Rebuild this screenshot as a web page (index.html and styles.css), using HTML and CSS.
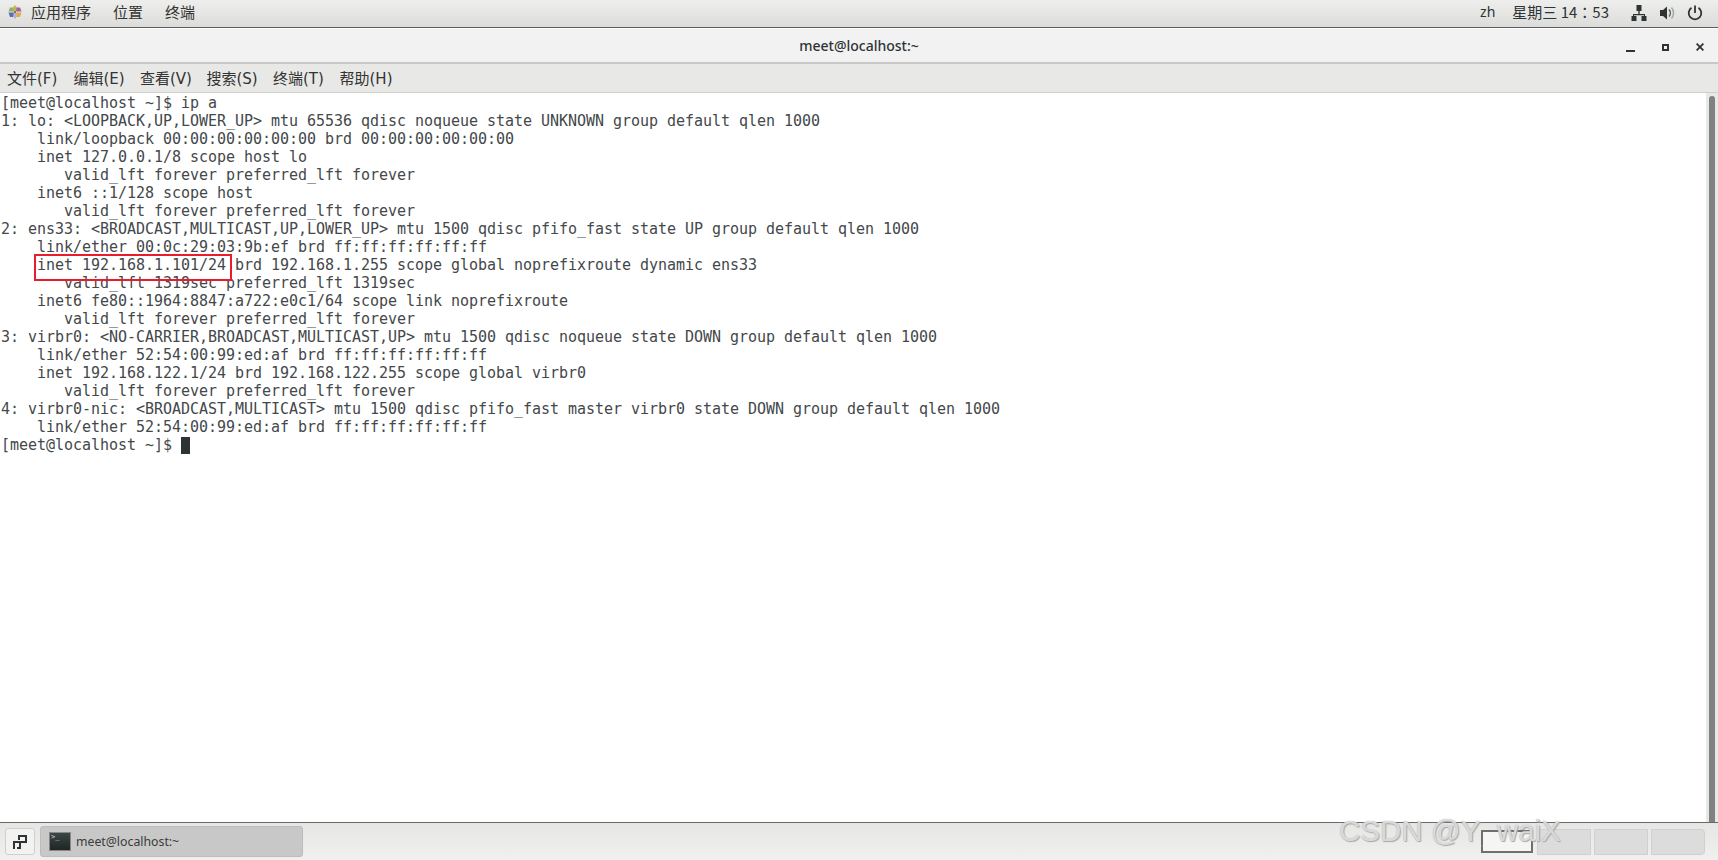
FILE: index.html
```html
<!DOCTYPE html>
<html lang="zh">
<head>
<meta charset="utf-8">
<title>meet@localhost:~</title>
<link rel="stylesheet" href="styles.css">
</head>
<body>
<div class="desktop">
  <header class="topbar">
    <nav class="top-left">
      <svg class="logo" viewBox="0 0 14 14" width="14" height="14">
        <path d="M7 0L9 2.500 8 6H6L5 2.500z" fill="#c9b35a"/>
        <path d="M2 2.500h3.500L6 6.500H0.500z" fill="#8fb35a"/>
        <path d="M12 2.500H8.500L8 6.500h5.500z" fill="#a8609c"/>
        <path d="M0.500 7.500H6L5.500 12H2z" fill="#5a6fb0"/>
        <path d="M13.500 7.500H8L8.500 12H12z" fill="#dcae46"/>
        <path d="M6 8h2l1 3.500L7 14l-2-2.500z" fill="#b9b0c9"/>
        <path d="M6 6h2v2H6z" fill="#8a6a8f"/>
      </svg>
      <span class="top-item">应用程序</span><span class="top-item">位置</span><span class="top-item">终端</span>
    </nav>
    <div class="top-right">
      <span class="lang">zh</span>
      <span class="clock">星期三 14<span class="colon" lang="zh-TW">：</span>53</span>
      <svg class="tray" viewBox="0 0 16 16" width="16" height="16"><path d="M5.500 0h5v6H8.700v3H14v2h1.500v5h-5v-5H13v-.8H3v.8h2.500v5h-5v-5H2V9h5.300V6H5.500z" fill="#2e3436"/></svg>
      <svg class="tray" viewBox="0 0 16 16" width="16" height="16"><path d="M1 5h3l4-3.500v13L4 11H1z" fill="#2e3436"/><path d="M10 4.500c1.800 2 1.800 5 0 7" fill="none" stroke="#5b6061" stroke-width="1.500"/><path d="M12.500 2.500c2.700 3 2.700 8 0 11" fill="none" stroke="#a5a8a8" stroke-width="1.500"/></svg>
      <svg class="tray" viewBox="0 0 16 16" width="16" height="16"><path d="M8 .5v7.500M4.500 2.800a6.300 6.300 0 1 0 7 0" fill="none" stroke="#2e3436" stroke-width="1.800"/></svg>
    </div>
  </header>
  <div class="titlebar">
    <span class="title">meet@localhost:~</span>
    <div class="winbtns">
      <span class="wb-min"></span>
      <span class="wb-max"></span>
      <svg class="wb-close" viewBox="0 0 8 8" width="8" height="8"><path d="M.6.600l6.800 6.800M7.400.600L.6 7.400" stroke="#2e3436" stroke-width="1.800"/></svg>
    </div>
  </div>
  <div class="menubar">
    <span class="menu">文件(F)</span><span class="menu">编辑(E)</span><span class="menu">查看(V)</span><span class="menu">搜索(S)</span><span class="menu">终端(T)</span><span class="menu">帮助(H)</span>
  </div>
  <main class="terminal">
<pre class="output">[meet@localhost ~]$ ip a
1: lo: &lt;LOOPBACK,UP,LOWER_UP&gt; mtu 65536 qdisc noqueue state UNKNOWN group default qlen 1000
    link/loopback 00:00:00:00:00:00 brd 00:00:00:00:00:00
    inet 127.0.0.1/8 scope host lo
       valid_lft forever preferred_lft forever
    inet6 ::1/128 scope host
       valid_lft forever preferred_lft forever
2: ens33: &lt;BROADCAST,MULTICAST,UP,LOWER_UP&gt; mtu 1500 qdisc pfifo_fast state UP group default qlen 1000
    link/ether 00:0c:29:03:9b:ef brd ff:ff:ff:ff:ff:ff
    inet 192.168.1.101/24 brd 192.168.1.255 scope global noprefixroute dynamic ens33
       valid_lft 1319sec preferred_lft 1319sec
    inet6 fe80::1964:8847:a722:e0c1/64 scope link noprefixroute
       valid_lft forever preferred_lft forever
3: virbr0: &lt;NO-CARRIER,BROADCAST,MULTICAST,UP&gt; mtu 1500 qdisc noqueue state DOWN group default qlen 1000
    link/ether 52:54:00:99:ed:af brd ff:ff:ff:ff:ff:ff
    inet 192.168.122.1/24 brd 192.168.122.255 scope global virbr0
       valid_lft forever preferred_lft forever
4: virbr0-nic: &lt;BROADCAST,MULTICAST&gt; mtu 1500 qdisc pfifo_fast master virbr0 state DOWN group default qlen 1000
    link/ether 52:54:00:99:ed:af brd ff:ff:ff:ff:ff:ff
[meet@localhost ~]$ <span class="cursor"> </span></pre>
    <div class="mark"></div>
    <div class="scrollbar"><div class="thumb"></div></div>
  </main>
  <footer class="taskbar">
    <button class="show-desktop">
      <svg viewBox="0 0 14 14" width="14" height="14"><path d="M5 0h9v8H8V6h4V2H7v3H5z" fill="#2e3436"/><path d="M0 6h8v8H4v-2h2v-4H2v6H0z" fill="#2e3436"/></svg>
    </button>
    <div class="task">
      <span class="term-icon"><span class="prompt">&gt;_</span></span>
      <span class="task-label">meet@localhost:~</span>
    </div>
    <div class="workspaces">
      <span class="ws active"></span><span class="ws"></span><span class="ws"></span><span class="ws last"></span>
    </div>
    <span class="watermark">CSDN @Y<span class="wm-faint">_</span>waiX</span>
  </footer>
</div>
</body>
</html>
```
FILE: styles.css
```css
* { box-sizing: border-box; }
html, body { margin: 0; padding: 0; height: 100%; overflow: hidden; }
body { font-family: "Noto Sans", "Noto Sans CJK SC", sans-serif; color: #2e3436; background: #fff; }
.desktop { width: 1718px; height: 860px; display: flex; flex-direction: column; }

.topbar { height: 28px; flex: none; display: flex; justify-content: space-between; align-items: center; background: linear-gradient(#eeeeec, #dcdcda); border-bottom: 1px solid #5e5e5e; font-size: 15px; padding-bottom: 4px; }
.top-left { display: flex; align-items: center; padding-left: 8px; }
.logo { margin-right: 9px; }
.top-item { margin-right: 22px; font-family: "Noto Sans CJK SC", sans-serif; color: #333; }
.top-right { display: flex; align-items: center; padding-right: 3px; }
.lang { margin-right: 17px; font-size: 14px; }
.clock { margin-right: 22px; font-family: "Noto Sans CJK SC", sans-serif; }
.colon { font-family: "Noto Sans CJK TC", sans-serif; }
.tray { margin-right: 12px; margin-top: 3px; }

.titlebar { height: 36px; flex: none; position: relative; display: flex; align-items: center; justify-content: center; background: #f2f2f2; border-top: 1px solid #fff; border-bottom: 2px solid #c8c8c6; }
.title { font-size: 14px; font-weight: 500; color: #2e3436; font-family: "Noto Sans", sans-serif; }
.winbtns { position: absolute; right: 14px; top: 13px; display: flex; align-items: center; gap: 27px; }
.wb-min { display: block; width: 9px; height: 2px; background: #2e3436; margin-top: 8px; }
.wb-max { display: block; width: 7px; height: 7px; border: 2px solid #2e3436; }
.wb-close { display: block; }

.menubar { height: 29px; flex: none; display: flex; align-items: center; background: #e8e8e7; border-bottom: 1px solid #cfcfcd; padding: 0 0 2px 7px; font-size: 15px; color: #333; font-family: "DejaVu Sans", "Noto Sans CJK SC", sans-serif; }
.menu { width: 66.500px; white-space: nowrap; }

.terminal { flex: 1; display: flex; min-height: 0; background: #fff; position: relative; }
.output { flex: 1; margin: 0; padding: 1px 0 0 1px; font-family: "DejaVu Sans Mono", monospace; font-size: 15px; letter-spacing: -0.03px; line-height: 18px; color: #43484a; }
.mark { position: absolute; left: 34px; top: 161px; width: 198px; height: 27px; border: 2px solid #e81c2b; }
.cursor { display: inline-block; width: 9px; height: 17px; margin-top: 1px; background: #2e3436; vertical-align: top; }
.scrollbar { width: 12px; flex: none; padding: 3px 3px 0 3px; background: #e8e8e7; }
.thumb { width: 6px; height: 100%; background: #7e8382; border-radius: 3px 3px 0 0; }

.taskbar { height: 38px; flex: none; position: relative; display: flex; align-items: center; background: linear-gradient(#e6e6e4, #f0f0ee); border-top: 1px solid #6a6a6a; padding: 0 13px 0 5px; }
.show-desktop { width: 30px; height: 27px; padding: 0; display: flex; align-items: center; justify-content: center; background: #f2f2f0; border: 1px solid #cfcfcd; border-radius: 3px; }
.task { width: 263px; height: 31px; margin-left: 5px; display: flex; align-items: center; gap: 5px; padding-left: 8px; background: #c8c8c8; border: 1px solid #bcbcbc; border-radius: 3px; font-size: 12.300px; color: #3a3a3a; }
.term-icon { width: 22px; height: 19px; flex: none; background: linear-gradient(#3c4644, #1f2625); border: 1px solid #888; }
.prompt { display: block; font: 7px/7px "DejaVu Sans Mono", monospace; color: #ddd; padding: 1px 0 0 1px; }
.workspaces { margin-left: auto; display: flex; align-items: center; gap: 3px; }
.ws { width: 54px; height: 26px; background: #dcdcdc; border: 1px solid #d0d0d0; }
.ws.active { background: #f5f5f3; border: 2px solid #6f6f6f; height: 23px; width: 52px; margin-right: 1px; }
.ws.last { border-radius: 0 4px 4px 0; }
.watermark { position: absolute; left: 1339px; top: -9px; font: 29.500px "Liberation Sans", sans-serif; color: rgba(255,255,255,.65); text-shadow: 0 0 1px #999, 1px 1px 1px #aaa; white-space: nowrap; }
.wm-faint { color: rgba(255,255,255,.1); text-shadow: none; }
```
